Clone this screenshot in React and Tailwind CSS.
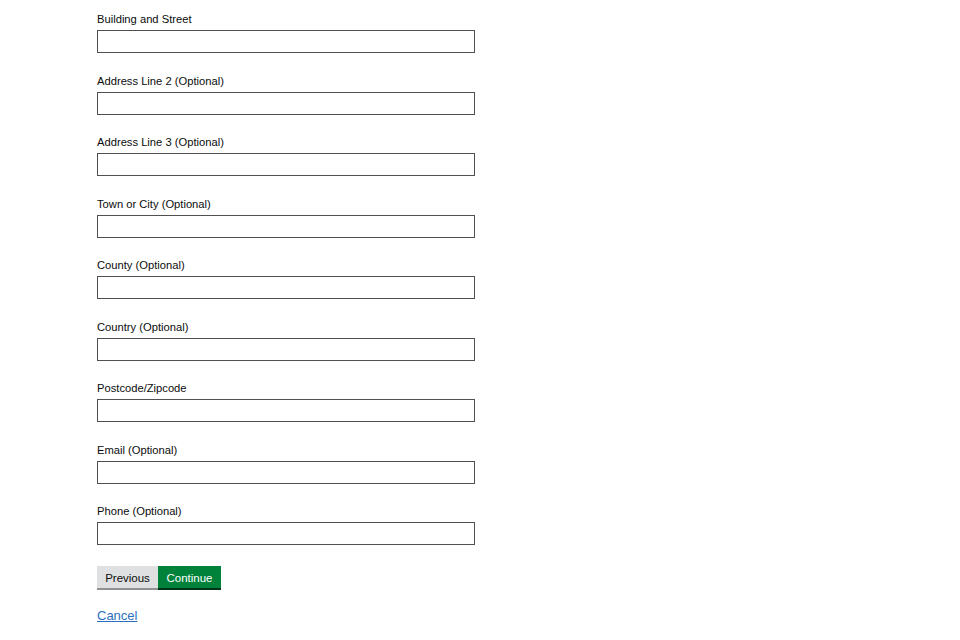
export default function App() {
  const fields = [
    "Building and Street",
    "Address Line 2 (Optional)",
    "Address Line 3 (Optional)",
    "Town or City (Optional)",
    "County (Optional)",
    "Country (Optional)",
    "Postcode/Zipcode",
    "Email (Optional)",
    "Phone (Optional)",
  ];

  return (
    <main className="min-h-screen bg-white pl-[97px] pt-[11px] font-['Liberation_Sans',Arial,sans-serif] text-[#0b0c0c]">
      <form className="flex flex-col">
        {fields.map((label) => (
          <div key={label} className="mb-[19.5px] flex flex-col">
            <label className="mb-[3px] text-[11.2px] leading-[16px]">{label}</label>
            <input
              type="text"
              className="h-[23px] w-[378px] border border-[#505050] bg-white outline-none"
            />
          </div>
        ))}

        <div className="mt-[1.5px] flex">
          <button
            type="button"
            className="h-[24px] w-[61px] border-b-2 border-[#929191] bg-[#dee0e2] pt-[2px] text-[11.5px] leading-[20px] text-[#0b0c0c]"
          >
            Previous
          </button>
          <button
            type="button"
            className="h-[24px] w-[63px] border-b-2 border-[#003418] bg-[#00823b] pt-[2px] text-[11.5px] leading-[20px] text-white"
          >
            Continue
          </button>
        </div>

        <a href="#" className="mt-[18px] w-fit text-[13px] leading-[16px] text-[#2b70c0] underline">
          Cancel
        </a>
      </form>
    </main>
  );
}
